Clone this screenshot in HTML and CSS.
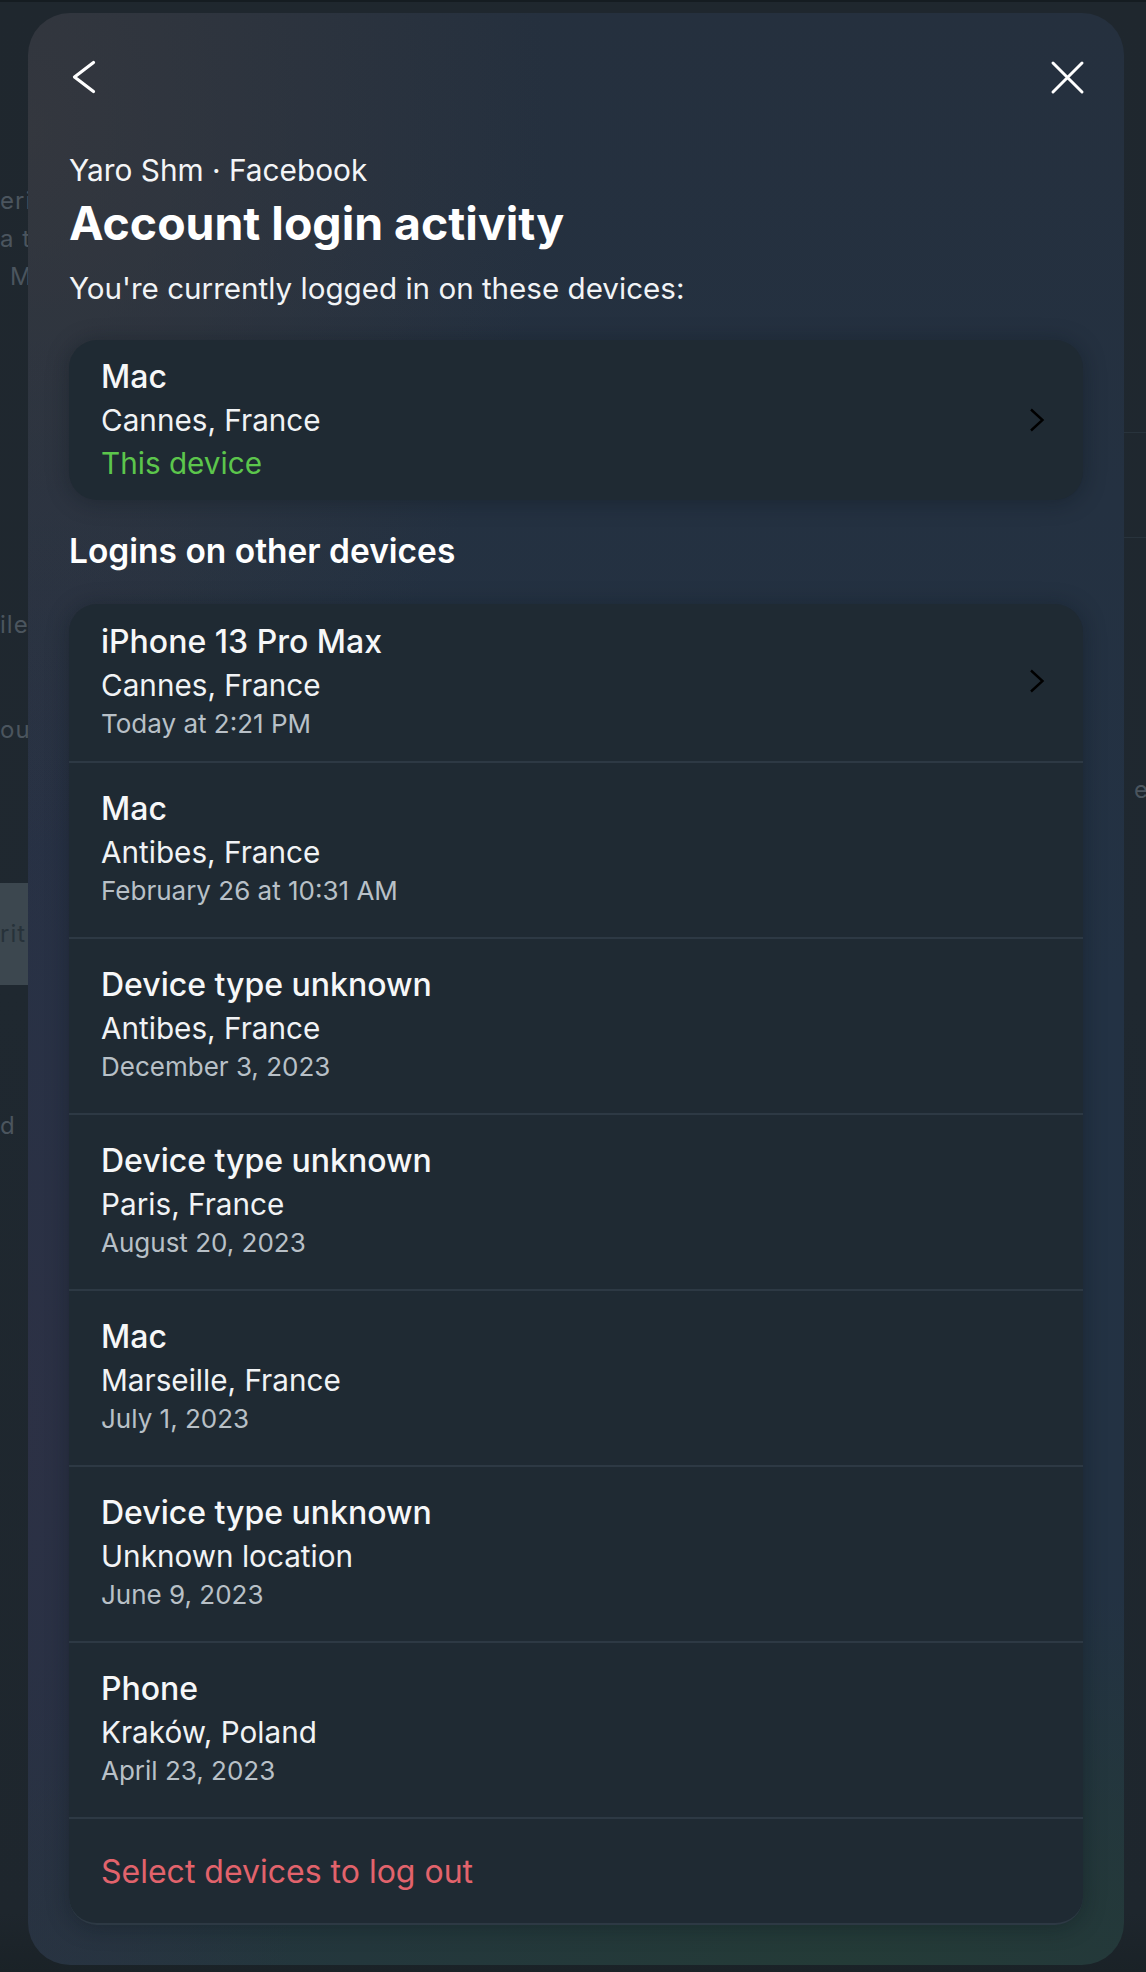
FILE: index.html
```html
<!DOCTYPE html>
<html lang="en">
<head>
<meta charset="utf-8">
<title>Account login activity</title>
<link rel="stylesheet" href="styles.css">
</head>
<body>
<div class="page">
  <aside class="bg-left">
    <div class="bg-word bg-w1">eric</div>
    <div class="bg-word">a t</div>
    <div class="bg-word bg-indent">M</div>
    <div class="bg-word bg-w4">ile</div>
    <div class="bg-word bg-w5">ou</div>
    <div class="bg-box"><span>rit</span></div>
    <div class="bg-word bg-w7">d</div>
  </aside>
  <aside class="bg-right">
    <div class="bg-rule bg-rule1"></div>
    <div class="bg-rule bg-rule2"></div>
    <div class="bg-tail"><span class="bg-bar"></span>e</div>
  </aside>
</div>

<section class="modal">
  <header class="modal-header">
    <svg class="icon" width="40" height="40" viewBox="0 0 40 40" aria-label="Back">
      <path d="M29.5 5.5 L10.5 20 L29.5 34.5" fill="none" stroke="#ffffff" stroke-width="3.2" stroke-linecap="round" stroke-linejoin="round"/>
    </svg>
    <svg class="icon" width="40" height="40" viewBox="0 0 40 40" aria-label="Close">
      <path d="M6 6 L35 35 M35 6 L6 35" fill="none" stroke="#ffffff" stroke-width="3" stroke-linecap="round"/>
    </svg>
  </header>

  <div class="modal-body">
    <p class="account">Yaro Shm · Facebook</p>
    <h1 class="title">Account login activity</h1>
    <p class="subtitle">You're currently logged in on these devices:</p>

    <div class="card card--current">
      <div class="device device--current">
        <div class="device-info">
          <div class="device-name">Mac</div>
          <div class="device-loc">Cannes, France</div>
          <div class="device-status">This device</div>
        </div>
        <svg class="chevron" width="16" height="24" viewBox="0 0 16 24"><path d="M2 1.5 L13.5 12 L2 22.5" fill="none" stroke="#000000" stroke-width="2.4"/></svg>
      </div>
    </div>

    <h2 class="section-title">Logins on other devices</h2>

    <div class="card card--list">
      <div class="device device--first">
        <div class="device-info">
          <div class="device-name">iPhone 13 Pro Max</div>
          <div class="device-loc">Cannes, France</div>
          <div class="device-time">Today at 2:21 PM</div>
        </div>
        <svg class="chevron" width="16" height="24" viewBox="0 0 16 24"><path d="M2 1.5 L13.5 12 L2 22.5" fill="none" stroke="#000000" stroke-width="2.4"/></svg>
      </div>
      <div class="device">
        <div class="device-info">
          <div class="device-name">Mac</div>
          <div class="device-loc">Antibes, France</div>
          <div class="device-time">February 26 at 10:31 AM</div>
        </div>
      </div>
      <div class="device">
        <div class="device-info">
          <div class="device-name">Device type unknown</div>
          <div class="device-loc">Antibes, France</div>
          <div class="device-time">December 3, 2023</div>
        </div>
      </div>
      <div class="device">
        <div class="device-info">
          <div class="device-name">Device type unknown</div>
          <div class="device-loc">Paris, France</div>
          <div class="device-time">August 20, 2023</div>
        </div>
      </div>
      <div class="device">
        <div class="device-info">
          <div class="device-name">Mac</div>
          <div class="device-loc">Marseille, France</div>
          <div class="device-time">July 1, 2023</div>
        </div>
      </div>
      <div class="device">
        <div class="device-info">
          <div class="device-name">Device type unknown</div>
          <div class="device-loc">Unknown location</div>
          <div class="device-time">June 9, 2023</div>
        </div>
      </div>
      <div class="device">
        <div class="device-info">
          <div class="device-name">Phone</div>
          <div class="device-loc">Kraków, Poland</div>
          <div class="device-time">April 23, 2023</div>
        </div>
      </div>
      <div class="logout-row">Select devices to log out</div>
    </div>
  </div>
</section>
</body>
</html>
```

FILE: styles.css
```css
* { box-sizing: border-box; }

html, body {
  margin: 0;
  padding: 0;
}

body {
  width: 1146px;
  height: 1972px;
  overflow: hidden;
  background: #1f272e;
  font-family: "Inter", "Liberation Sans", sans-serif;
  color: #ffffff;
  position: relative;
}

/* ---------- backdrop page ---------- */
.page {
  height: 1972px;
  display: flex;
  justify-content: space-between;
  border-top: 2px solid #151c21;
  background: linear-gradient(180deg, #1f272e 0%, #1f2830 50%, #1e262d 97%, #1a2227 100%);
}

.bg-left {
  width: 80px;
  padding-top: 180px;
  display: flex;
  flex-direction: column;
  font-size: 24px;
  line-height: 38px;
  color: #4b555e;
  letter-spacing: 1px;
  white-space: nowrap;
}

.bg-word { height: 38px; }
.bg-indent { padding-left: 10px; }
.bg-w4 { margin-top: 310px; }
.bg-w5 { margin-top: 67px; }
.bg-w7 { margin-top: 122px; }

.bg-box {
  margin-top: 134px;
  height: 102px;
  background: #3c474f;
  display: flex;
  align-items: center;
  color: #27323a;
}

.bg-right {
  width: 22px;
  display: flex;
  flex-direction: column;
}

.bg-rule {
  height: 1px;
  background: #28333c;
}
.bg-rule1 { margin-top: 430px; }
.bg-rule2 { margin-top: 104px; }

.bg-tail {
  margin-top: 236px;
  height: 30px;
  display: flex;
  align-items: center;
  font-size: 24px;
  color: #4b555e;
}

.bg-bar {
  width: 1px;
  height: 26px;
  background: #3b454d;
  margin-right: 10px;
}

/* ---------- modal ---------- */
.modal {
  position: absolute;
  top: 13px;
  left: 28px;
  width: 1096px;
  height: 1952px;
  border-radius: 42px;
  overflow: hidden;
  background:
    radial-gradient(ellipse 520px 720px at 0% 6%, rgba(58, 58, 62, 0.7), rgba(58, 58, 62, 0) 100%),
    radial-gradient(ellipse 300px 1100px at 0% 72%, rgba(50, 48, 70, 0.6), rgba(50, 48, 70, 0) 100%),
    radial-gradient(ellipse 1100px 380px at 75% 100%, rgba(36, 60, 54, 0.9), rgba(36, 60, 54, 0) 100%),
    linear-gradient(180deg, #25303e 0%, #233244 50%, #233242 100%);
}

.modal-header {
  display: flex;
  justify-content: space-between;
  align-items: center;
  padding: 44px 37px 0 36px;
}

.icon { display: block; }

.modal-body {
  padding: 0 41px;
}

.account {
  margin: 56px 0 0;
  font-size: 29.8px;
  line-height: 34px;
  color: #f4f5f7;
}

.title {
  margin: 10px 0 0;
  font-size: 46.4px;
  line-height: 52px;
  font-weight: 700;
  color: #ffffff;
}

.subtitle {
  margin: 21px 0 0;
  font-size: 29.6px;
  line-height: 36px;
  color: #f2f4f6;
}

.card {
  background: #1f2a33;
  border-radius: 28px;
  box-shadow: 0 2px 22px rgba(10, 16, 22, 0.35);
  overflow: hidden;
}

.card--current { margin-top: 34px; }

.card--list {
  margin-top: 33px;
  border-bottom: 2px solid #2d3944;
}

.section-title {
  margin: 31px 0 0;
  font-size: 33.5px;
  line-height: 40px;
  font-weight: 600;
  color: #ffffff;
}

.device {
  display: flex;
  align-items: center;
  justify-content: space-between;
  padding: 26px 38px 30px 32px;
  border-top: 2px solid #2d3944;
}

.device--first {
  border-top: none;
  padding-top: 18px;
  padding-bottom: 21px;
}

.device--current {
  border-top: none;
  padding-top: 17px;
  padding-bottom: 17px;
}

.device-name {
  font-size: 32px;
  line-height: 40px;
  font-weight: 500;
  color: #f6f7f8;
}

.device-loc {
  font-size: 29.7px;
  line-height: 46px;
  color: #f1f3f5;
}

.device-time {
  font-size: 26px;
  line-height: 32px;
  color: #b8c0c7;
}

.device-status {
  font-size: 29.7px;
  line-height: 40px;
  color: #5cc64c;
}

.chevron { display: block; flex: none; }

.logout-row {
  border-top: 2px solid #2d3944;
  height: 106px;
  display: flex;
  align-items: center;
  padding-left: 32px;
  font-size: 32px;
  color: #e2636c;
}
```
